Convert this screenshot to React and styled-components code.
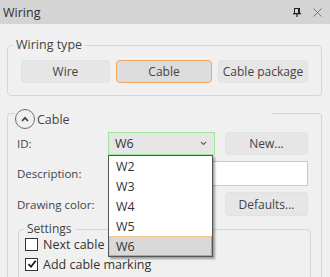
import styled, { createGlobalStyle } from 'styled-components';

const GlobalStyle = createGlobalStyle`
  html, body {
    margin: 0;
    padding: 0;
    background: #f0f0f0;
  }
  body {
    font-family: 'Open Sans', 'Noto Sans', sans-serif;
    font-size: 11.5px;
    color: #333;
  }
`;

const Window = styled.div`
  width: 330px;
  height: 277px;
  overflow: hidden;
  background: #f0f0f0;
`;

const TitleBar = styled.div`
  height: 24px;
  display: flex;
  align-items: center;
  padding: 0 8px 0 3px;
  background: #d4d4d4;
`;

const Title = styled.div`
  flex: 1;
  font-size: 12.5px;
  color: #2e2e2e;
`;

const TitleIcons = styled.div`
  display: flex;
  align-items: center;
  gap: 12px;
`;

const Body = styled.div`
  padding: 14px 8px 0 7px;
`;

const GroupBox = styled.fieldset`
  margin: ${(p) => p.$margin || '0'};
  padding: ${(p) => p.$padding || '0'};
  border: 1px solid #d6d6d6;
  border-radius: 4px;
  min-width: 0;
`;

const Legend = styled.legend`
  padding: 0 3px;
  margin-left: ${(p) => p.$indent || '0'};
  line-height: 14px;
  font-size: ${(p) => p.$size || '12px'};
  color: #444;
`;

const ButtonRow = styled.div`
  display: grid;
  grid-template-columns: 89px 96px 90px;
  gap: 6px;
`;

const Button = styled.button`
  height: ${(p) => p.$height || '23px'};
  padding: 0;
  font-family: inherit;
  font-size: 12px;
  color: #444;
  background: ${(p) => (p.$active ? '#dcdcdc' : '#e6e6e6')};
  border: 1px solid ${(p) => (p.$active ? '#f2a659' : '#e2e2e2')};
  border-radius: 4px;
`;

const Section = styled.div`
  margin-top: 17px;
  height: 200px;
  padding: 0 10px 0 9px;
  border: 1px solid #d6d6d6;
  border-bottom: none;
  border-radius: 4px 4px 0 0;
`;

const SectionHeader = styled.div`
  display: flex;
  align-items: center;
  gap: 2px;
  width: 257px;
  height: 20px;
  margin: -5px 0 0 -2px;
  background: #f0f0f0;
  font-size: 12.5px;
  color: #444;
`;

const Toggle = styled.span`
  width: 18px;
  height: 18px;
  display: flex;
  align-items: center;
  justify-content: center;
  border: 1px solid #6e6e6e;
  border-radius: 50%;
`;

const FormGrid = styled.div`
  display: grid;
  grid-template-columns: 81px 107px 83px;
  column-gap: 10px;
  row-gap: 6px;
  margin-top: 3px;
  align-items: center;
`;

const Label = styled.div`
  font-size: 11.5px;
  color: #444;
`;

const ComboWrap = styled.div`
  position: relative;
  height: 23px;
`;

const Combo = styled.div`
  height: 100%;
  box-sizing: border-box;
  display: flex;
  align-items: center;
  justify-content: space-between;
  padding: 0 7px 0 6px;
  background: #e6e6e6;
  border: 1.5px solid #9ae69a;
  font-size: 12.5px;
  color: #333;
`;

const DropList = styled.div`
  position: absolute;
  top: 100%;
  left: 0;
  width: 105px;
  box-sizing: border-box;
  border: 1px solid #555;
  background: #fff;
  box-shadow: 2px 2px 2px rgba(0, 0, 0, 0.35);
  z-index: 5;
`;

const DropItem = styled.div`
  height: 20px;
  box-sizing: border-box;
  display: flex;
  align-items: center;
  padding-left: 6px;
  font-size: 12.5px;
  color: #333;
  background: ${(p) => (p.$selected ? '#d9d9d9' : '#fff')};
  border: 1px solid ${(p) => (p.$selected ? '#f5c48e' : 'transparent')};
  border-bottom-color: ${(p) => (p.$selected ? '#eb9a4c' : 'transparent')};
  border-right-color: ${(p) => (p.$selected ? '#eb9a4c' : 'transparent')};
`;

const TextInput = styled.div`
  grid-column: 2 / 4;
  height: 23px;
  background: #fff;
  border: 1px solid #c8c8c8;
`;

const Swatch = styled.div`
  height: 23px;
`;

const CheckList = styled.div`
  margin-top: -2px;
`;

const CheckRow = styled.label`
  display: flex;
  align-items: center;
  gap: 5px;
  height: 20px;
  margin-left: ${(p) => p.$indent || '0'};
  font-size: 12.5px;
  color: #333;
  white-space: nowrap;
`;

const Box = styled.span`
  width: 11px;
  height: 11px;
  flex: none;
  display: flex;
  align-items: center;
  justify-content: center;
  background: #fff;
  border: 1px solid #333;
`;

const PinIcon = () => (
  <svg width="8" height="9" viewBox="0 0 8 9">
    <rect x="1.5" y="0.5" width="5" height="5" fill="none" stroke="#222" />
    <rect x="5" y="0.5" width="1.5" height="5" fill="#222" />
    <rect x="0" y="5" width="8" height="1.3" fill="#222" />
    <rect x="3.4" y="6" width="1.2" height="3" fill="#222" />
  </svg>
);

const CloseIcon = () => (
  <svg width="9" height="9" viewBox="0 0 9 9">
    <path d="M0.5 0.5 L8.5 8.5 M8.5 0.5 L0.5 8.5" stroke="#777" strokeWidth="1" />
  </svg>
);

const ChevronUp = () => (
  <svg width="8" height="6" viewBox="0 0 8 6">
    <path d="M1 5 L4 1.8 L7 5" fill="none" stroke="#444" strokeWidth="1.8" />
  </svg>
);

const ChevronDown = () => (
  <svg width="7" height="5" viewBox="0 0 7 5">
    <path d="M1 1 L3.5 3.5 L6 1" fill="none" stroke="#666" strokeWidth="1.1" />
  </svg>
);

const Check = () => (
  <svg width="10" height="10" viewBox="0 0 10 10">
    <path d="M1.5 5.2 L4 7.8 L8.7 1.8" fill="none" stroke="#111" strokeWidth="1.7" />
  </svg>
);

const items = ['W2', 'W3', 'W4', 'W5', 'W6'];

const Checkbox = ({ checked, indent, children }) => (
  <CheckRow $indent={indent}>
    <Box>{checked && <Check />}</Box>
    {children}
  </CheckRow>
);

const App = () => (
  <Window>
    <GlobalStyle />
    <TitleBar>
      <Title>Wiring</Title>
      <TitleIcons>
        <PinIcon />
        <CloseIcon />
      </TitleIcons>
    </TitleBar>
    <Body>
      <GroupBox $padding="8px 12px 12px 13px">
        <Legend $size="12.5px" $indent="-8px">
          Wiring type
        </Legend>
        <ButtonRow>
          <Button>Wire</Button>
          <Button $active>Cable</Button>
          <Button>Cable package</Button>
        </ButtonRow>
      </GroupBox>

      <Section>
        <SectionHeader>
          <Toggle>
            <ChevronUp />
          </Toggle>
          Cable
        </SectionHeader>
        <FormGrid>
          <Label>ID:</Label>
          <ComboWrap>
            <Combo>
              W6
              <ChevronDown />
            </Combo>
            <DropList>
              {items.map((id) => (
                <DropItem key={id} $selected={id === 'W6'}>
                  {id}
                </DropItem>
              ))}
            </DropList>
          </ComboWrap>
          <Button>New...</Button>

          <Label>Description:</Label>
          <TextInput />

          <Label>Drawing color:</Label>
          <Swatch />
          <Button $height="24px">Defaults...</Button>
        </FormGrid>

        <GroupBox $margin="6px 0 0 1px" $padding="0 0 0 6px">
          <Legend $indent="-1px">Settings</Legend>
          <CheckList>
            <Checkbox>Next cable automatically</Checkbox>
            <Checkbox checked>Add cable marking</Checkbox>
            <Checkbox checked indent="33px">
              Use default cable marking
            </Checkbox>
          </CheckList>
        </GroupBox>
      </Section>
    </Body>
  </Window>
);

export default App;
